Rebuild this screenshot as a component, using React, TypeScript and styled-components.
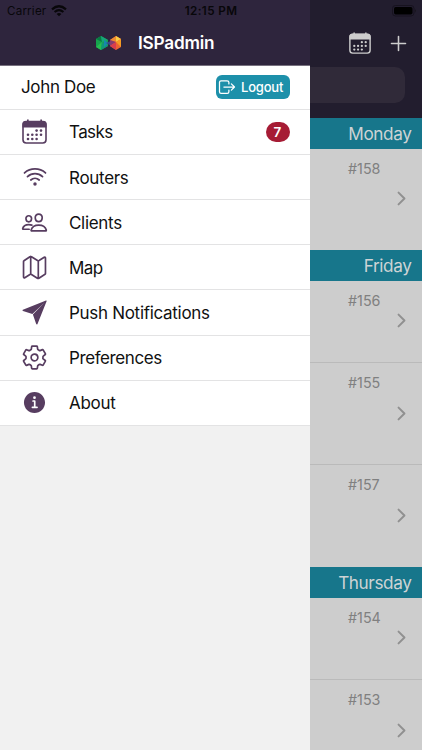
import React from "react";
import styled, { createGlobalStyle } from "styled-components";
import {
  IoWifiOutline,
  IoPeopleOutline,
  IoMapOutline,
  IoSettingsOutline,
  IoInformationCircle,
  IoLogOutOutline,
  IoAddOutline,
  IoChevronForward,
} from "react-icons/io5";

const GlobalStyle = createGlobalStyle`
  * { box-sizing: border-box; }
  body { margin: 0; font-family: Inter, "Liberation Sans", sans-serif; color: #111; overflow: hidden; }
  svg { display: block; flex: none; }
`;

const Screen = styled.div`
  position: relative;
  display: flex;
  width: 422px;
  height: 750px;
  overflow: hidden;
  background: #cdcdcd;
`;

const StatusBar = styled.div`
  position: absolute;
  inset: 0 0 auto 0;
  z-index: 2;
  display: grid;
  grid-template-columns: 1fr auto 1fr;
  align-items: center;
  height: 22px;
  padding: 0 5px 0 7px;
  color: #08070a;
`;

const Carrier = styled.div`
  display: flex;
  align-items: center;
  gap: 5px;
  font-size: 11.6px;
  letter-spacing: 0.2px;
`;

const Clock = styled.div`
  margin-right: 2px;
  font-size: 11.7px;
  font-weight: 600;
  letter-spacing: 0.4px;
`;

const BatterySlot = styled.div`
  justify-self: end;
`;

const Drawer = styled.aside`
  display: flex;
  flex-direction: column;
  width: 310px;
  flex: none;
  background: #f1f1f1;
`;

const DrawerHeader = styled.header`
  display: flex;
  align-items: center;
  gap: 16px;
  height: 66px;
  padding: 20px 0 0 95px;
  background: #2e253d;
  border-bottom: 1px solid #77717f;
  color: #fff;
`;

const AppName = styled.h1`
  margin: 0;
  font-size: 17.2px;
  font-weight: 600;
  letter-spacing: -0.2px;
`;

const UserRow = styled.div`
  display: flex;
  align-items: center;
  justify-content: space-between;
  height: 43.8px;
  padding: 0 20.5px 0 21px;
  background: #fff;
  border-bottom: 1px solid #e3e3e4;
`;

const UserName = styled.span`
  font-size: 17px;
  letter-spacing: -0.35px;
`;

const LogoutButton = styled.button`
  display: flex;
  align-items: center;
  gap: 4.5px;
  width: 74px;
  height: 24px;
  padding: 0 0 0 1px;
  border: 0;
  border-radius: 6px;
  background: #1d90aa;
  color: #fff;
  font: 500 13px Inter, sans-serif;
  letter-spacing: -0.2px;
`;

const MenuItem = styled.div`
  display: flex;
  align-items: center;
  height: 45.15px;
  padding: 0 20.5px 0 21px;
  background: #fff;
  border-bottom: 1px solid #e3e3e4;
`;

const MenuIcon = styled.span`
  display: flex;
  justify-content: center;
  width: 27px;
  margin-right: 21px;
  color: #573d60;
`;

const MenuLabel = styled.span<{ $spacing: number }>`
  flex: 1;
  padding-top: 1px;
  font-size: 17px;
  letter-spacing: ${(p) => p.$spacing}px;
`;

const Badge = styled.span`
  display: grid;
  place-items: center;
  width: 24px;
  height: 20px;
  border-radius: 10px;
  background: #a61c35;
  color: #fff;
  font-size: 13.5px;
  font-weight: 600;
`;

const TaskPage = styled.main`
  flex: 1;
  min-width: 0;
`;

const PageHeader = styled.header`
  height: 118px;
  padding-top: 31px;
  background: #221d2e;
  color: #cdcdcd;
`;

const Actions = styled.div`
  display: flex;
  align-items: center;
  justify-content: flex-end;
  gap: 15px;
  height: 24px;
  padding-right: 11px;
`;

const SearchField = styled.div`
  height: 36.5px;
  margin: 11.5px 17px 0 0;
  border-radius: 0 10px 10px 0;
  background: #302a39;
`;

const DayHeading = styled.h2`
  display: flex;
  align-items: center;
  justify-content: flex-end;
  height: 31px;
  margin: 0;
  padding-right: 10.5px;
  background: #17768b;
  color: #cdd3d5;
  font-size: 17.2px;
  font-weight: 400;
  letter-spacing: -0.4px;
`;

const TaskRow = styled.article<{ $height: number; $top: number; $gap: number; $line: boolean }>`
  display: flex;
  flex-direction: column;
  align-items: flex-end;
  gap: ${(p) => p.$gap}px;
  height: ${(p) => p.$height}px;
  padding: ${(p) => p.$top}px 10px 0 0;
  border-bottom: ${(p) => (p.$line ? "1px solid #bababa" : "0")};
  background: #cdcdcd;
  color: #909090;
  overflow: hidden;
`;

const TaskNumber = styled.span`
  width: 64px;
  height: 18px;
  color: #808080;
  font-size: 14.3px;
  line-height: 20px;
`;

const CalendarIcon = ({ size }: { size: number }) => (
  <svg width={size} height={size} viewBox="0 0 25 25" fill="currentColor">
    <rect x="1" y="2.5" width="23" height="21.5" rx="3.2" fill="none" stroke="currentColor" strokeWidth="1.6" />
    <path d="M.5 8.5V5Q.5 2 4 2H5V.5H6.7V2H18.3V.5H20V2H21Q24.5 2 24.5 5V8.5Z" />
    <circle cx="14.6" cy="11.6" r="1.3" />
    <circle cx="19" cy="11.6" r="1.3" />
    <circle cx="6" cy="15.8" r="1.3" />
    <circle cx="10.3" cy="15.8" r="1.3" />
    <circle cx="14.6" cy="15.8" r="1.3" />
    <circle cx="19" cy="15.8" r="1.3" />
    <circle cx="6" cy="20" r="1.3" />
    <circle cx="10.3" cy="20" r="1.3" />
    <circle cx="14.6" cy="20" r="1.3" />
  </svg>
);

const PaperPlaneIcon = () => (
  <svg width="25" height="25" viewBox="0 0 25 25" fill="currentColor">
    <path d="M24 .4Q24.9.3 24.6 1.3L15.5 23.9Q14.8 25 14.1 23.8L10.9 14.6 22.6 2.4 10.4 14.1 1 10.9Q-.1 10.3.9 9.7Z" />
  </svg>
);

const Brand = () => (
  <svg width="27" height="16" viewBox="0 0 27 16">
    <path d="M1 4 6 1 13 5 13 11 6 15 1 12Z" fill="#16a34d" />
    <path d="M1 4 6 1 7 7Z" fill="#087943" />
    <path d="M6 1 13 5 7 7Z" fill="#16a67a" />
    <path d="M1 12 7 7 6 15Z" fill="#27bd51" />
    <path d="M6 15 7 7 13 11Z" fill="#129578" />
    <path d="M9 5 14 8 9 12Z" fill="#1688ad" />
    <path d="M18 5 11 8 18 12Z" fill="#394884" />
    <path d="M15 5 21 1 26 4 26 12 21 15 15 11Z" fill="#ed6332" />
    <path d="M15 5 21 1 21 7Z" fill="#ee8b32" />
    <path d="M21 1 26 4 21 7Z" fill="#f8cc44" />
    <path d="M26 4 26 12 21 7Z" fill="#f49b23" />
    <path d="M15 5 21 7 15 11Z" fill="#843c70" />
    <path d="M15 11 21 7 21 15Z" fill="#d93d4e" />
  </svg>
);

const StatusWifi = () => (
  <svg width="16" height="12" viewBox="0 0 16 12" fill="none" stroke="currentColor" strokeWidth="2.2">
    <path d="M1 4.3Q8-1.8 15 4.3M3.6 7Q8 3.3 12.4 7" />
    <path d="M8 11.3 5.6 8.9Q8 7 10.4 8.9Z" fill="currentColor" stroke="none" />
  </svg>
);

const Battery = () => (
  <svg width="25" height="12" viewBox="0 0 25 12">
    <rect x=".5" y=".5" width="21.5" height="10.5" rx="3" fill="none" stroke="#17131f" />
    <rect x="2" y="2" width="18.5" height="7.5" rx="1.7" fill="#000" />
    <path d="M23.2 4Q24.5 5.7 23.2 7.4Z" fill="#111" />
  </svg>
);

const menu = [
  { label: "Tasks", icon: <CalendarIcon size={25} />, count: 7, spacing: -0.6 },
  { label: "Routers", icon: <IoWifiOutline size={28} />, spacing: -0.3 },
  { label: "Clients", icon: <IoPeopleOutline size={27} />, spacing: -0.3 },
  { label: "Map", icon: <IoMapOutline size={27} />, spacing: -0.6 },
  { label: "Push Notifications", icon: <PaperPlaneIcon />, spacing: -0.3 },
  { label: "Preferences", icon: <IoSettingsOutline size={27} />, spacing: -0.4 },
  { label: "About", icon: <IoInformationCircle size={27} />, spacing: -0.3 },
];

const days = [
  { name: "Monday", tasks: [{ id: 158, height: 101, top: 9.5, gap: 11.5 }] },
  {
    name: "Friday",
    tasks: [
      { id: 156, height: 81.5, top: 10, gap: 1 },
      { id: 155, height: 102, top: 10.5, gap: 12 },
      { id: 157, height: 102.5, top: 10.5, gap: 12 },
    ],
  },
  {
    name: "Thursday",
    tasks: [
      { id: 154, height: 82, top: 9.5, gap: 1 },
      { id: 153, height: 102, top: 9.5, gap: 12.5 },
    ],
  },
];

export default function App() {
  return (
    <>
      <GlobalStyle />
      <Screen>
        <StatusBar>
          <Carrier>Carrier<StatusWifi /></Carrier>
          <Clock>12:15 PM</Clock>
          <BatterySlot><Battery /></BatterySlot>
        </StatusBar>
        <Drawer>
          <DrawerHeader>
            <Brand />
            <AppName>ISPadmin</AppName>
          </DrawerHeader>
          <UserRow>
            <UserName>John Doe</UserName>
            <LogoutButton><IoLogOutOutline size={20} />Logout</LogoutButton>
          </UserRow>
          {menu.map((item) => (
            <MenuItem key={item.label}>
              <MenuIcon>{item.icon}</MenuIcon>
              <MenuLabel $spacing={item.spacing}>{item.label}</MenuLabel>
              {item.count && <Badge>{item.count}</Badge>}
            </MenuItem>
          ))}
        </Drawer>
        <TaskPage>
          <PageHeader>
            <Actions>
              <CalendarIcon size={22} />
              <IoAddOutline size={25} />
            </Actions>
            <SearchField />
          </PageHeader>
          {days.map((day) => (
            <React.Fragment key={day.name}>
              <DayHeading>{day.name}</DayHeading>
              {day.tasks.map((task, i) => (
                <TaskRow
                  key={task.id}
                  $height={task.height}
                  $top={task.top}
                  $gap={task.gap}
                  $line={i < day.tasks.length - 1}
                >
                  <TaskNumber>#{task.id}</TaskNumber>
                  <IoChevronForward size={21} />
                </TaskRow>
              ))}
            </React.Fragment>
          ))}
        </TaskPage>
      </Screen>
    </>
  );
}
